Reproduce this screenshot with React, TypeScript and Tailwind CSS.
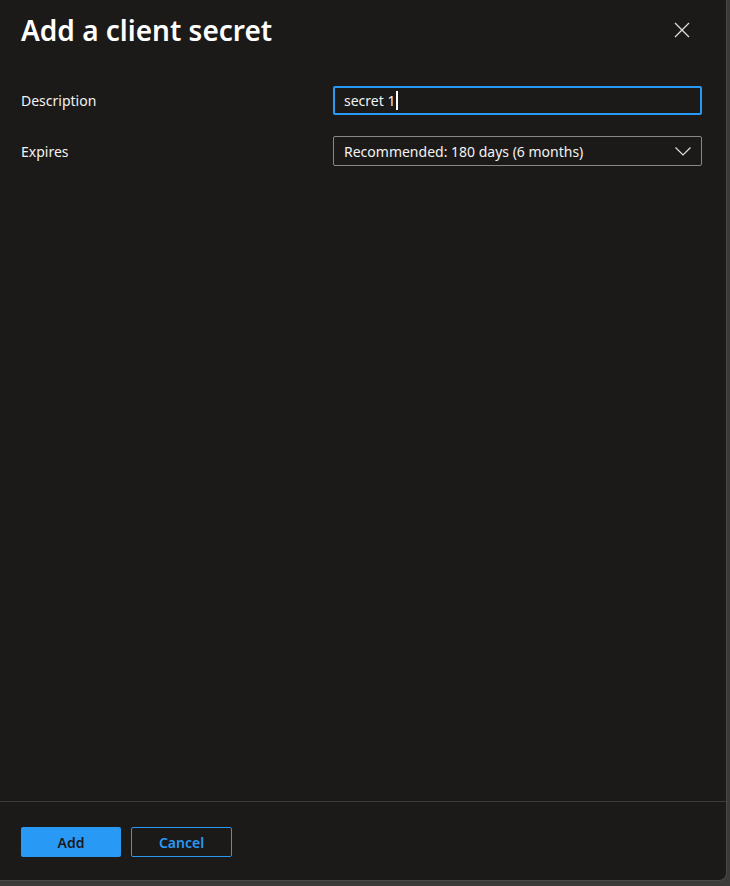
const FONT = "font-['Segoe_UI','Noto_Sans','Open_Sans',sans-serif]";

function CloseIcon() {
  return (
    <svg width="16" height="16" viewBox="0 0 16 16" fill="none" aria-hidden>
      <path d="M1 1 L15 15 M15 1 L1 15" stroke="#e1dfdd" strokeWidth="1.3" />
    </svg>
  );
}

function Chevron() {
  return (
    <svg width="16" height="9" viewBox="0 0 16 9" fill="none" aria-hidden>
      <path d="M0.5 0.5 L8 8 L15.5 0.5" stroke="#e1dfdd" strokeWidth="1.2" />
    </svg>
  );
}

export default function App() {
  return (
    <div className={`w-[730px] h-[886px] bg-[#3b3a39] ${FONT}`}>
      <div className="w-[727px] h-[881px] bg-[#1b1a19] rounded-br-[8px] border-r border-b border-[#4a4948] flex flex-col">
        {/* Header */}
        <div className="flex items-start justify-between pl-[21px] pr-[36px] pt-[10px]">
          <h1 className="text-[28px] leading-[40px] font-semibold text-white">
            Add a client secret
          </h1>
          <button className="mt-[12px] p-0" aria-label="Close">
            <CloseIcon />
          </button>
        </div>

        {/* Form */}
        <div className="mt-[36px] pl-[21px] pr-[24px] flex flex-col gap-[21px] text-[14px] text-[#f3f2f1]">
          <div className="flex items-center">
            <label className="w-[312px] shrink-0">Description</label>
            <div className="flex-1 h-[29px] border-2 border-[#2899f5] rounded-[2px] flex items-center pl-[9px]">
              <span>secret 1</span>
              <span className="ml-[1px] w-[1.5px] h-[19px] bg-white" />
            </div>
          </div>
          <div className="flex items-center">
            <label className="w-[312px] shrink-0">Expires</label>
            <div className="flex-1 h-[30px] border border-[#8a8886] rounded-[2px] flex items-center justify-between pl-[10px] pr-[10px]">
              <span>Recommended: 180 days (6 months)</span>
              <Chevron />
            </div>
          </div>
        </div>

        <div className="flex-1" />

        {/* Footer */}
        <div className="border-t border-[#3b3a39] h-[79px] pl-[21px] pt-[25px] flex items-start gap-[10px] text-[14px] font-semibold">
          <button className="w-[100px] h-[30px] rounded-[2px] bg-[#2899f5] text-[#1b1a19]">
            Add
          </button>
          <button className="w-[101px] h-[30px] rounded-[2px] border border-[#2899f5] text-[#2899f5]">
            Cancel
          </button>
        </div>
      </div>
    </div>
  );
}
